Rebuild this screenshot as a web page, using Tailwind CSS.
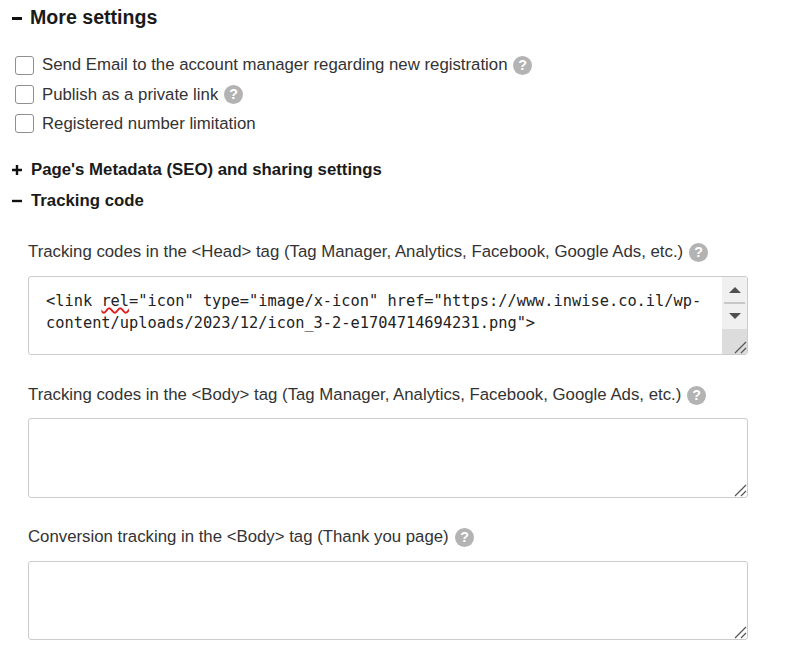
<!DOCTYPE html>
<html>
<head>
  <meta charset="utf-8">
  <script src="https://cdn.jsdelivr.net/npm/@tailwindcss/browser@4"></script>
</head>
<body class="bg-white text-[#333] font-['Liberation_Sans',sans-serif] h-[661px] overflow-hidden">

  <div class="w-[792px] pl-[12px]">
    <!-- more settings -->
    <div class="flex items-center h-[20px] mt-[8px] text-[#1a1a1a]">
      <span class="w-[18px] leading-none">
        <span class="block w-[10px] h-[3px] bg-[#111] mt-[1px]"></span>
      </span>
      <h2 class="text-[19.6px] font-bold leading-none">More settings</h2>
    </div>

    <div class="mt-[22px] pl-[3px] text-[16.8px]">
      <label class="flex items-center h-[30px] gap-[8px]">
        <span class="w-[19px] h-[19px] rounded-[3px] border border-[#8f8f8f] bg-white"></span>
        <span>Send Email to the account manager regarding new registration</span>
        <svg class="w-[19px] h-[19px] -ml-[3px] translate-x-[1px]" viewBox="0 0 20 20"><circle cx="10" cy="10" r="10" fill="#b3b3b3"/><text x="10" y="15" text-anchor="middle" font-size="15" font-weight="700" fill="#fff" font-family="Liberation Sans">?</text></svg>
      </label>
      <label class="flex items-center h-[29px] gap-[8px]">
        <span class="w-[19px] h-[19px] rounded-[3px] border border-[#8f8f8f] bg-white"></span>
        <span>Publish as a private link</span>
        <svg class="w-[19px] h-[19px] -ml-[3px] translate-x-[1px]" viewBox="0 0 20 20"><circle cx="10" cy="10" r="10" fill="#b3b3b3"/><text x="10" y="15" text-anchor="middle" font-size="15" font-weight="700" fill="#fff" font-family="Liberation Sans">?</text></svg>
      </label>
      <label class="flex items-center h-[29px] gap-[8px]">
        <span class="w-[19px] h-[19px] rounded-[3px] border border-[#8f8f8f] bg-white"></span>
        <span>Registered number limitation</span>
      </label>
    </div>

    <!-- collapsed sections -->
    <div class="flex items-center h-[20px] mt-[22px] text-[#1a1a1a]">
      <svg class="w-[19px] h-[12px]" viewBox="0 0 19 12"><path d="M0 6h10M5 1v10" stroke="#111" stroke-width="2.4" fill="none"/></svg>
      <h3 class="text-[16.8px] font-bold leading-none">Page's Metadata (SEO) and sharing settings</h3>
    </div>
    <div class="flex items-center h-[20px] mt-[11px] text-[#1a1a1a]">
      <svg class="w-[19px] h-[12px]" viewBox="0 0 19 12"><path d="M0 6h10" stroke="#111" stroke-width="2.4" fill="none"/></svg>
      <h3 class="text-[16.8px] font-bold leading-none">Tracking code</h3>
    </div>

    <!-- tracking fields -->
    <div class="pl-[16px] w-[736px]">
      <div class="flex items-center h-[20px] mt-[31px] gap-[6px] text-[16.8px]">
        <span>Tracking codes in the &lt;Head&gt; tag (Tag Manager, Analytics, Facebook, Google Ads, etc.)</span>
        <svg class="w-[19px] h-[19px]" viewBox="0 0 20 20"><circle cx="10" cy="10" r="10" fill="#b3b3b3"/><text x="10" y="15" text-anchor="middle" font-size="15" font-weight="700" fill="#fff" font-family="Liberation Sans">?</text></svg>
      </div>
      <div class="relative mt-[14px] h-[79px] rounded-[3px] border border-[#ccc] bg-white">
        <div class="pl-[17px] pr-[30px] pt-[13px] font-['DejaVu_Sans_Mono',monospace] text-[15.33px] leading-[22px] text-[#222] break-all">
          &lt;link <span class="underline decoration-wavy decoration-[#e02020] decoration-[1.5px] underline-offset-1">rel</span>="icon" type="image/x-icon" href="https://www.inwise.co.il/wp-<br>content/uploads/2023/12/icon_3-2-e1704714694231.png"&gt;
        </div>
        <!-- scrollbar -->
        <div class="absolute right-0 top-0 bottom-0 w-[25px] flex flex-col bg-[#f0f0f0] rounded-r-[3px]">
          <div class="h-[52px] flex flex-col items-center">
            <span class="mt-[10px] w-0 h-0 border-x-[6px] border-x-transparent border-b-[6px] border-b-[#505050]"></span>
            <span class="mt-[9px] w-[21px] h-[2px] bg-[#c8c8c8]"></span>
            <span class="mt-[9px] w-0 h-0 border-x-[6px] border-x-transparent border-t-[6px] border-t-[#505050]"></span>
          </div>
          <div class="relative flex-1 bg-[#dcdcdc] rounded-br-[3px]">
            <svg class="absolute right-0 bottom-0 w-[14px] h-[14px]" viewBox="0 0 14 14"><path d="M2 13L13 2M8 13L13 8" stroke="#555" stroke-width="1.2" fill="none"/></svg>
          </div>
        </div>
      </div>

      <div class="flex items-center h-[20px] mt-[30px] gap-[6px] text-[16.8px]">
        <span>Tracking codes in the &lt;Body&gt; tag (Tag Manager, Analytics, Facebook, Google Ads, etc.)</span>
        <svg class="w-[19px] h-[19px]" viewBox="0 0 20 20"><circle cx="10" cy="10" r="10" fill="#b3b3b3"/><text x="10" y="15" text-anchor="middle" font-size="15" font-weight="700" fill="#fff" font-family="Liberation Sans">?</text></svg>
      </div>
      <div class="relative mt-[13px] h-[80px] rounded-[3px] border border-[#ccc] bg-white">
        <svg class="absolute right-0 bottom-0 w-[14px] h-[14px]" viewBox="0 0 14 14"><path d="M2 13L13 2M8 13L13 8" stroke="#555" stroke-width="1.2" fill="none"/></svg>
      </div>

      <div class="flex items-center h-[20px] mt-[29px] gap-[6px] text-[16.8px]">
        <span>Conversion tracking in the &lt;Body&gt; tag (Thank you page)</span>
        <svg class="w-[19px] h-[19px]" viewBox="0 0 20 20"><circle cx="10" cy="10" r="10" fill="#b3b3b3"/><text x="10" y="15" text-anchor="middle" font-size="15" font-weight="700" fill="#fff" font-family="Liberation Sans">?</text></svg>
      </div>
      <div class="relative mt-[14px] h-[79px] rounded-[3px] border border-[#ccc] bg-white">
        <svg class="absolute right-0 bottom-0 w-[14px] h-[14px]" viewBox="0 0 14 14"><path d="M2 13L13 2M8 13L13 8" stroke="#555" stroke-width="1.2" fill="none"/></svg>
      </div>
    </div>
  </div>

</body>
</html>
